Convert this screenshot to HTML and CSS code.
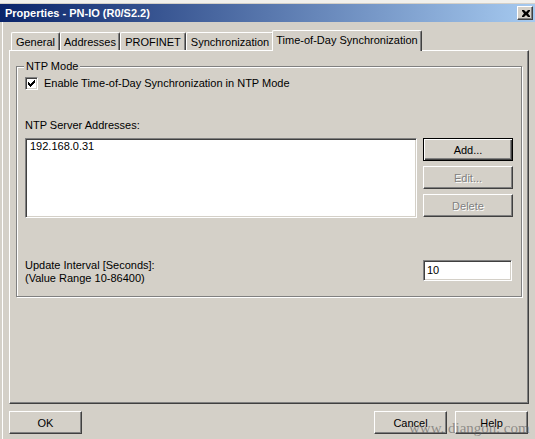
FILE: index.html
```html
<!DOCTYPE html>
<html>
<head>
<meta charset="utf-8">
<link rel="stylesheet" href="styles.css">
</head>
<body>
<div class="desk"></div>
<div class="dialog">
  <div class="titlebar">
    <span class="title">Properties - PN-IO (R0/S2.2)</span>
    <span class="close"><svg width="8" height="7" viewBox="0 0 8 7"><path d="M0 0h2l2 2l2-2h2v1l-2 2.5l2 2.5v1h-2l-2-2l-2 2h-2v-1l2-2.5l-2-2.5z" fill="#000"/></svg></span>
  </div>
  <div class="body">
    <div class="tabs">
      <div class="tab t1">General</div>
      <div class="tab t2">Addresses</div>
      <div class="tab t3">PROFINET</div>
      <div class="tab t4">Synchronization</div>
      <div class="tab active">Time-of-Day Synchronization</div>
    </div>
    <div class="panel">
      <div class="group">
        <span class="legend">NTP Mode</span>
        <div class="checkrow">
          <span class="checkbox"><svg width="7" height="7" viewBox="0 0 7 7"><path d="M0 2h1v1h1v1h1v-1h1v-1h1v-1h1v-1h1v3h-1v1h-1v1h-1v1h-1v1h-1v-1h-1v-1h-1z" fill="#000"/></svg></span>
          <span class="checklabel">Enable Time-of-Day Synchronization in NTP Mode</span>
        </div>
        <div class="label servers">NTP Server Addresses:</div>
        <div class="listrow">
          <div class="listbox"><div class="item">192.168.0.31</div></div>
          <div class="btncol">
            <div class="btn default">Add...</div>
            <div class="btn disabled">Edit...</div>
            <div class="btn disabled">Delete</div>
          </div>
        </div>
        <div class="updaterow">
          <div class="updatelabel">Update Interval [Seconds]:<br>(Value Range 10-86400)</div>
          <div class="input">10</div>
        </div>
      </div>
    </div>
    <div class="footer">
      <div class="btn wide">OK</div>
      <div class="right">
        <div class="btn wide">Cancel</div>
        <div class="btn wide">Help</div>
      </div>
    </div>
  </div>
</div>
<span class="watermark">www. diangon. com</span>
</body>
</html>
```
FILE: styles.css
```css
* { box-sizing: border-box; }
html, body { margin: 0; padding: 0; }
body {
  width: 535px;
  height: 439px;
  overflow: hidden;
  background: #d4d0c8;
  font-family: "Liberation Sans", Arial, sans-serif;
  font-size: 11px;
  color: #000;
  position: relative;
}
.desk {
  height: 4px;
  background: #f1f0ec;
  border-bottom: 1px solid #d4d0c8;
}
.titlebar {
  height: 18px;
  background: linear-gradient(to right, #0a246a, #a6caf0);
  display: flex;
  align-items: center;
  justify-content: space-between;
  padding: 0 2px 0 5px;
}
.title {
  color: #fff;
  font-weight: bold;
  font-size: 11px;
  line-height: 18px;
}
.close {
  width: 16px;
  height: 14px;
  background: #d4d0c8;
  border: 1px solid;
  border-color: #fff #404040 #404040 #fff;
  box-shadow: inset -1px -1px #808080;
  display: flex;
  align-items: center;
  justify-content: center;
  padding-left: 1px;
}
.close svg { display: block; }
.body {
  margin-left: 2px;
  border-left: 1px solid #fff;
  padding: 8px 6px 0 6px;
  height: 417px;
}
.tabs {
  display: flex;
  align-items: flex-end;
  height: 20px;
  padding-left: 2px;
  position: relative;
  z-index: 1;
}
.tab {
  height: 18px;
  border-top: 1px solid #fff;
  border-left: 1px solid #fff;
  border-right: 1px solid #404040;
  box-shadow: inset -1px 0 #808080;
  border-radius: 2px 2px 0 0;
  text-align: center;
  line-height: 16px;
  padding-top: 1px;
  background: #d4d0c8;
}
.t1 { width: 49px; }
.t2 { width: 60px; }
.t3 { width: 66px; }
.t4 { width: 88px; }
.tab.active {
  width: 150px;
  height: 21px;
  margin: 0 -2px -1px -2px;
  line-height: 16px;
  padding-top: 1px;
  position: relative;
}
.panel {
  width: 520px;
  height: 354px;
  border: 1px solid;
  border-color: #fff #404040 #404040 #fff;
  box-shadow: inset -1px -1px #808080;
  padding: 15px 6px 0 6px;
}
.group {
  position: relative;
  width: 506px;
  height: 231px;
  border: 1px solid #808080;
  box-shadow: inset 1px 1px #fff, 1px 1px #fff;
  padding: 10px 0 0 8px;
}
.legend {
  position: absolute;
  left: 7px;
  top: -7px;
  padding: 0 2px;
  line-height: 13px;
  background: #d4d0c8;
}
.checkrow {
  display: flex;
  align-items: center;
  height: 13px;
  gap: 6px;
}
.checkbox {
  width: 13px;
  height: 13px;
  background: #fff;
  border: 1px solid;
  border-color: #808080 #fff #fff #808080;
  box-shadow: inset 1px 1px #404040, inset -1px -1px #d4d0c8;
  display: flex;
  align-items: center;
  justify-content: center;
}
.checkbox svg { display: block; }
.checklabel { line-height: 13px; }
.label { line-height: 13px; }
.servers { margin-top: 29px; }
.listrow {
  display: flex;
  gap: 6px;
  margin-top: 6px;
}
.listbox {
  width: 392px;
  height: 80px;
  background: #fff;
  border: 1px solid;
  border-color: #808080 #fff #fff #808080;
  box-shadow: inset 1px 1px #404040, inset -1px -1px #d4d0c8;
  padding: 1px 0 0 4px;
}
.item { line-height: 13px; }
.btncol {
  display: flex;
  flex-direction: column;
  gap: 5px;
}
.btn {
  width: 90px;
  height: 23px;
  border: 1px solid;
  border-color: #fff #404040 #404040 #fff;
  box-shadow: inset -1px -1px #808080;
  display: flex;
  align-items: center;
  justify-content: center;
  background: #d4d0c8;
}
.btn.default {
  border-color: #000;
  box-shadow: inset 1px 1px #fff, inset -1px -1px #404040, inset -2px -2px #808080;
}
.btn.disabled {
  color: #808080;
  text-shadow: 1px 1px #fff;
}
.updaterow {
  display: flex;
  justify-content: space-between;
  align-items: flex-start;
  margin-top: 41px;
  width: 487px;
}
.updatelabel { line-height: 13px; }
.input {
  width: 89px;
  height: 21px;
  margin-top: 1px;
  background: #fff;
  border: 1px solid;
  border-color: #808080 #fff #fff #808080;
  box-shadow: inset 1px 1px #404040, inset -1px -1px #d4d0c8;
  padding: 3px 0 0 3px;
  line-height: 13px;
}
.footer {
  display: flex;
  justify-content: space-between;
  width: 519px;
  margin-top: 7px;
}
.footer .right {
  display: flex;
  gap: 8px;
}
.btn.wide { width: 73px; }
.watermark {
  position: absolute;
  left: 409px;
  top: 421px;
  font-family: "Liberation Serif", "Times New Roman", serif;
  font-size: 15px;
  line-height: 15px;
  color: rgba(90, 90, 90, 0.6);
  white-space: nowrap;
}
```
